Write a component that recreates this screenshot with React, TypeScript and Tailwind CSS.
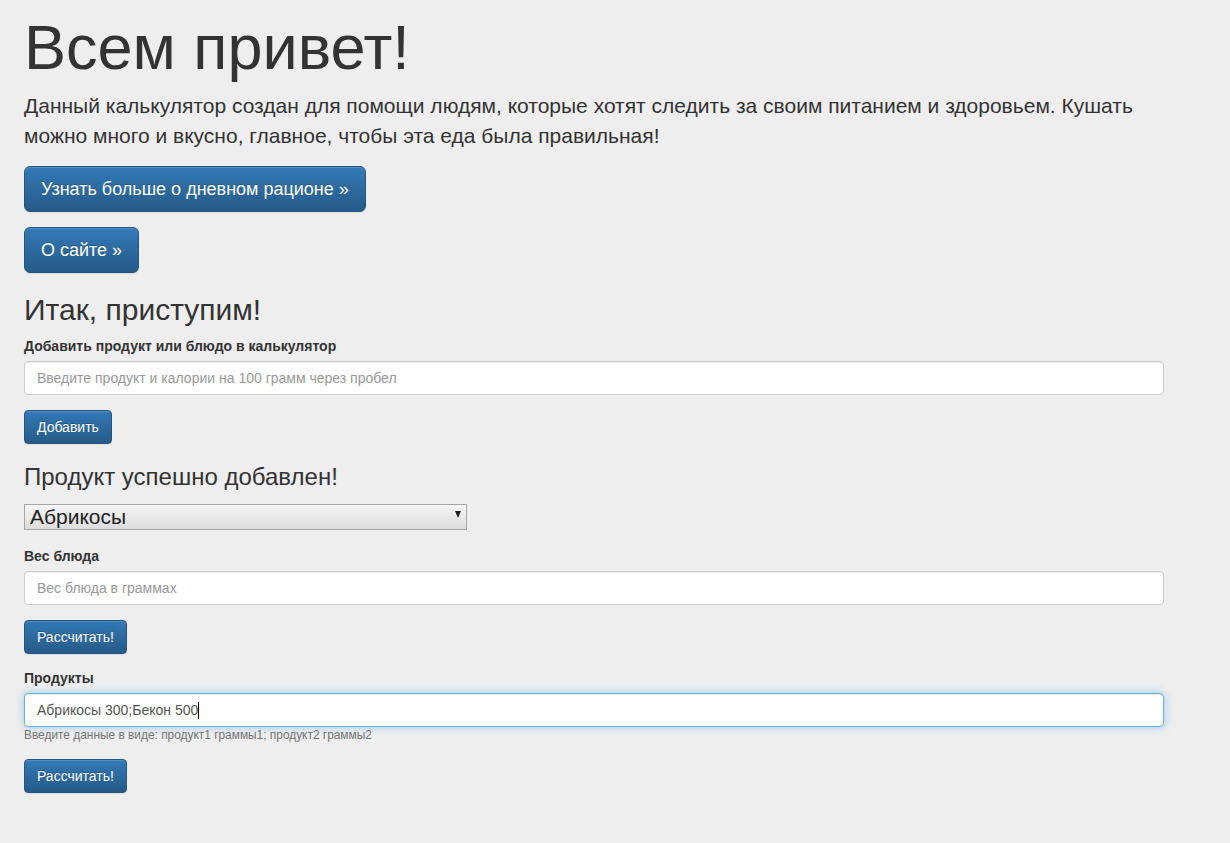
import React from "react";

const btnBase =
  "inline-block text-white border border-[#245580] bg-gradient-to-b from-[#337ab7] to-[#265a88] [text-shadow:0_-1px_0_rgba(0,0,0,0.2)] shadow-[inset_0_1px_0_rgba(255,255,255,0.15),0_1px_1px_rgba(0,0,0,0.075)] whitespace-nowrap";
const btnLg = `${btnBase} text-[18px] leading-[24px] px-[16px] py-[10px] rounded-[6px]`;
const btnSm = `${btnBase} text-[14px] leading-[20px] px-[12px] py-[6px] rounded-[4px]`;
const inputCls =
  "block w-full h-[34px] px-[12px] py-[6px] text-[14px] leading-[20px] text-[#555] bg-white border border-[#cccccc] rounded-[4px] shadow-[inset_0_1px_1px_rgba(0,0,0,0.075)] placeholder:text-[#999] outline-none";

export default function App() {
  return (
    <div className="min-h-screen bg-[#eeeeee] text-[#333333] font-['Liberation_Sans',Arial,sans-serif]">
      <div className="w-[1140px] ml-[24px] pt-[13px] pb-[50px]">
        <h1 className="text-[63px] leading-[1.1] mb-[9px]">Всем привет!</h1>
        <p className="text-[21px] leading-[30px] mb-[15px]">
          Данный калькулятор создан для помощи людям, которые хотят следить за своим питанием и здоровьем. Кушать
          можно много и вкусно, главное, чтобы эта еда была правильная!
        </p>
        <div className="flex mb-[15px]">
          <a className={btnLg}>Узнать больше о дневном рационе »</a>
        </div>
        <div className="flex">
          <a className={btnLg}>О сайте »</a>
        </div>

        <h2 className="text-[30px] leading-[33px] mt-[20px] mb-[10px]">Итак, приступим!</h2>
        <label className="block text-[14px] leading-[20px] font-bold mb-[5px]">
          Добавить продукт или блюдо в калькулятор
        </label>
        <input className={inputCls} placeholder="Введите продукт и калории на 100 грамм через пробел" />
        <div className="flex mt-[15px]">
          <button className={btnSm}>Добавить</button>
        </div>

        <h3 className="text-[24px] leading-[26px] mt-[20px] mb-[14px]">Продукт успешно добавлен!</h3>
        <div className="relative w-[443px] h-[26px]">
          <select className="appearance-none block w-full h-[26px] pl-[5px] pr-[20px] text-[21px] leading-[24px] text-[#222] border border-[#a6a6a6] bg-gradient-to-b from-[#f6f6f6] to-[#dddddd] outline-none rounded-none">
            <option>Абрикосы</option>
            <option>Бекон</option>
          </select>
          <span className="pointer-events-none absolute right-[6px] top-[7px] w-0 h-0 border-l-[3.5px] border-r-[3.5px] border-t-[7px] border-l-transparent border-r-transparent border-t-[#222]" />
        </div>

        <label className="block text-[14px] leading-[20px] font-bold mt-[16px] mb-[5px]">Вес блюда</label>
        <input className={inputCls} placeholder="Вес блюда в граммах" />
        <div className="flex mt-[15px]">
          <button className={btnSm}>Рассчитать!</button>
        </div>

        <label className="block text-[14px] leading-[20px] font-bold mt-[14px] mb-[5px]">Продукты</label>
        <div className="flex items-center w-full h-[34px] px-[12px] text-[14px] leading-[20px] text-[#555] bg-white border border-[#66afe9] rounded-[4px] shadow-[inset_0_1px_1px_rgba(0,0,0,0.075),0_0_8px_rgba(102,175,233,0.6)]">
          <span>Абрикосы 300;Бекон 500</span>
          <span className="inline-block w-px h-[17px] bg-black" />
        </div>
        <p className="text-[11.9px] leading-[17px] text-[#737373] mt-0 mb-[15px]">
          Введите данные в виде: продукт1 граммы1; продукт2 граммы2
        </p>
        <div className="flex">
          <button className={btnSm}>Рассчитать!</button>
        </div>
      </div>
    </div>
  );
}
